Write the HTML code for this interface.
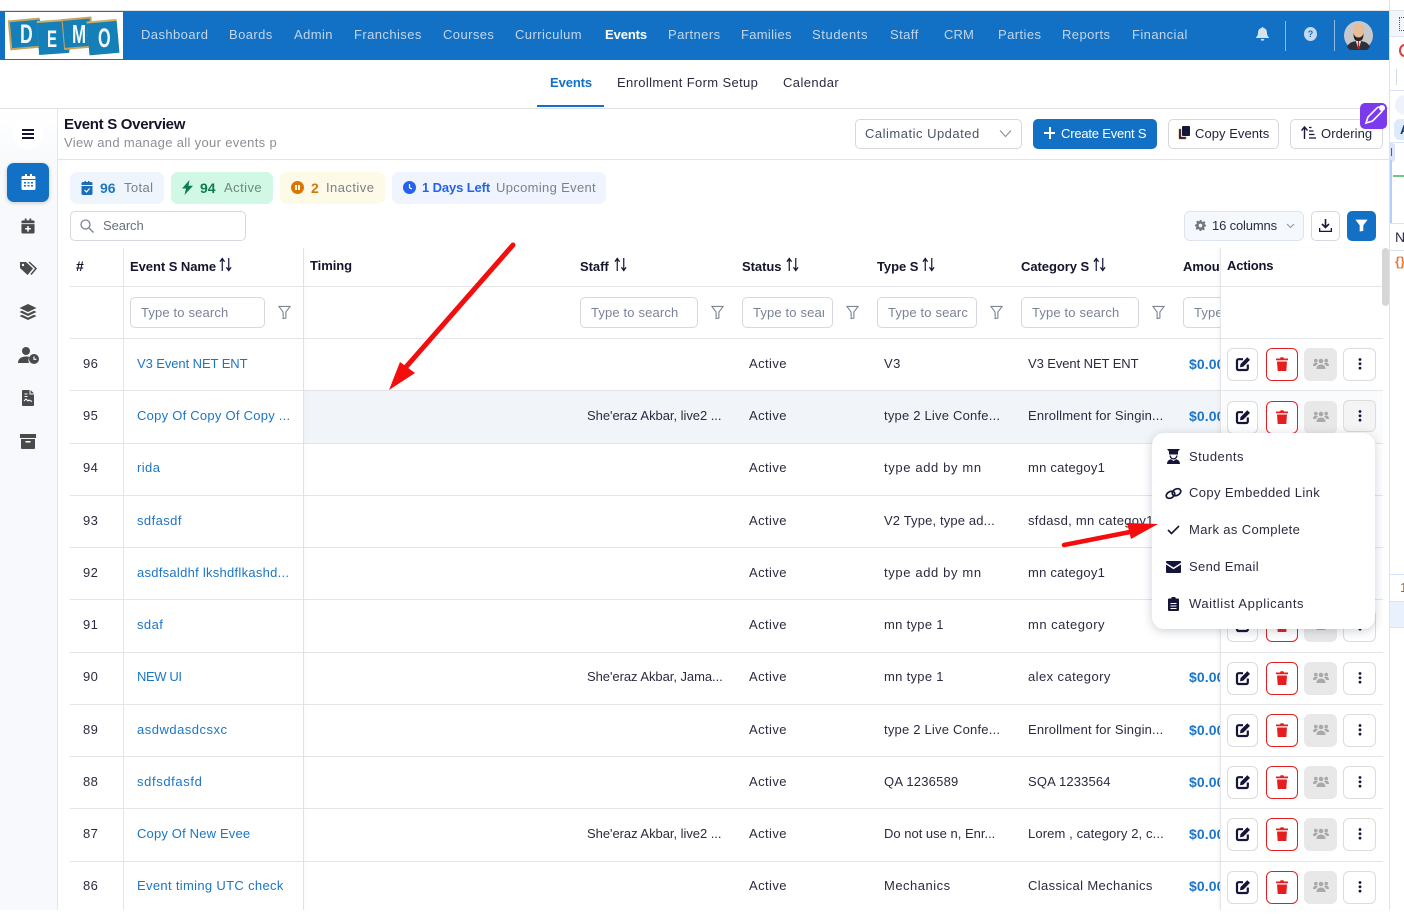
<!DOCTYPE html>
<html><head><meta charset="utf-8"><title>Events</title>
<style>
html,body{margin:0;padding:0;width:1404px;height:910px;overflow:hidden;background:#fff;font-family:"Liberation Sans",sans-serif}
div,span,svg{position:absolute;box-sizing:border-box}
.t{white-space:nowrap;line-height:20px;font-size:13px;letter-spacing:.42px;color:#2b2b40}
.n{color:#c3d5e9;top:25px;letter-spacing:.42px}
.h{font-weight:bold;color:#14142b;top:256px;letter-spacing:-.05px}
.b{background:#fff;border:1px solid #d6d8e0;border-radius:5px}
.f{top:297px;height:31px;background:#fff;border:1px solid #d6d8e0;border-radius:5px;overflow:hidden;color:#7a8394;font-size:13px;line-height:29px;padding-left:10px;white-space:nowrap;letter-spacing:.15px}
.r{left:70px;width:1313px;height:53px;border-top:1px solid #e3e5ea}
.l{color:#1b76c6}
.m{color:#1b76c6;font-weight:bold;font-size:14px;letter-spacing:.1px;left:1189px;width:31px;overflow:hidden}
.a{width:31px;height:33px;top:9px;background:#fff;border:1px solid #dcdcdc;border-radius:6px}
.a svg{left:7px;top:7px;width:16px;height:16px}
.a1{left:1157px}.a2{left:1196px;width:32px;border-color:#e51f1f}.a3{left:1234px;background:#e8e8e8;border-color:#e8e8e8;width:33px}.a4{left:1273px;width:33px}
.a2 svg{left:7px}.a3 svg{left:8px}.a4 svg{left:8px}
</style></head><body>
<svg width="0" height="0" style="position:absolute">
<symbol id="ed" viewBox="0 0 16 16"><path d="M8 3.200H3.500A1.500 1.500 0 0 0 2 4.700v7.800A1.500 1.500 0 0 0 3.500 14h7.800a1.500 1.500 0 0 0 1.500-1.500V8.500" fill="none" stroke="#15153a" stroke-width="2.200"/><path d="M5.500 8 12.300 1.200 15 3.900 8.200 10.700 5 11.200z" fill="#15153a"/></symbol>
<symbol id="tr" viewBox="0 0 16 16"><path d="M2 2.500h4l.6-1.200h2.800l.6 1.200h4v1.800H2zM3 5.500h10l-.7 9.500H3.700z" fill="#e51f1f"/></symbol>
<symbol id="gr" viewBox="0 0 16 16"><circle cx="8" cy="5" r="2.300" fill="#a9a9a9"/><circle cx="2.800" cy="4.500" r="1.800" fill="#a9a9a9"/><circle cx="13.200" cy="4.500" r="1.800" fill="#a9a9a9"/><path d="M3.500 13c0-3 2-4.500 4.500-4.500s4.500 1.500 4.500 4.500zM0 10c0-2 1-3.500 3-3.500 1 0 1.500.5 2 1-1.500 1-2 2-2.200 2.500zM16 10c0-2-1-3.500-3-3.500-1 0-1.500.5-2 1 1.500 1 2 2 2.200 2.500z" fill="#a9a9a9"/></symbol>
<symbol id="dt" viewBox="0 0 16 16"><circle cx="8" cy="3.500" r="1.400" fill="#15153a"/><circle cx="8" cy="7.800" r="1.400" fill="#15153a"/><circle cx="8" cy="12.100" r="1.400" fill="#15153a"/></symbol>
<symbol id="fn" viewBox="0 0 14 16"><path d="M1 1.500h12L8.500 7.500v6.500L5.500 14.500V7.500z" fill="none" stroke="#7d8592" stroke-width="1.200"/></symbol>
<symbol id="so" viewBox="0 0 14 16"><path d="M3.500 15V2.500M1 5l2.500-3.500L6 5" fill="none" stroke="#15153a" stroke-width="1.300"/><path d="M10.500 1v12.500M8 11l2.500 3.500L13 11" fill="none" stroke="#15153a" stroke-width="1.300"/></symbol>
</svg>

<!-- navbar -->
<div style="left:0;top:10px;width:1404px;height:1px;background:#dfe3e8"></div>
<div style="left:0;top:11px;width:1389px;height:49px;background:#1271c4"></div>
<div style="left:5px;top:12px;width:118px;height:47px;background:#fff"></div>
<svg style="left:5px;top:12px" width="118" height="47" viewBox="0 0 118 47">
<g transform="rotate(-5 20 22)"><rect x="4" y="7" width="32" height="30" fill="#c9a35a"/><rect x="6" y="9" width="30" height="26" fill="#1580b8"/></g>
<g transform="rotate(-4 47 26)"><rect x="33" y="8" width="31" height="33" fill="#d3ae66"/><rect x="33" y="10" width="30" height="32" fill="#1580b8"/></g>
<g transform="rotate(-5 70 24)"><rect x="58" y="6" width="30" height="31" fill="#c9a35a"/><rect x="59" y="8" width="27" height="27" fill="#1580b8"/></g>
<g transform="rotate(-5 99 25)"><rect x="83" y="8" width="30" height="33" fill="#d3ae66"/><rect x="83" y="10" width="30" height="32" fill="#1580b8"/></g>
<text transform="translate(15,31) scale(.65,1)" font-family="Liberation Sans" font-weight="bold" font-size="27" fill="#f3f7fa">D</text>
<text transform="translate(42,35) scale(.6,.95)" font-family="Liberation Sans" font-weight="bold" font-size="25" fill="#f3f7fa">E</text>
<text transform="translate(67,31) scale(.65,1)" font-family="Liberation Sans" font-weight="bold" font-size="26" fill="#f3f7fa">M</text>
<text transform="translate(93,35) scale(.6,1)" font-family="Liberation Sans" font-weight="bold" font-size="27" fill="#f3f7fa">O</text>
</svg>
<span class="t n" style="left:141px">Dashboard</span>
<span class="t n" style="left:229px">Boards</span>
<span class="t n" style="left:294px">Admin</span>
<span class="t n" style="left:354px">Franchises</span>
<span class="t n" style="left:443px">Courses</span>
<span class="t n" style="left:515px">Curriculum</span>
<span class="t n" style="left:605px;color:#fff;font-weight:bold;letter-spacing:-.1px">Events</span>
<span class="t n" style="left:668px">Partners</span>
<span class="t n" style="left:741px;letter-spacing:.3px">Families</span>
<span class="t n" style="left:812px;letter-spacing:.6px">Students</span>
<span class="t n" style="left:890px">Staff</span>
<span class="t n" style="left:944px;letter-spacing:.1px">CRM</span>
<span class="t n" style="left:998px">Parties</span>
<span class="t n" style="left:1062px">Reports</span>
<span class="t n" style="left:1132px">Financial</span>
<svg style="left:1256px;top:27px" width="13" height="14" viewBox="0 0 13 14"><path d="M6.500 0a1 1 0 0 1 1 1c2.500.5 3.500 2.500 3.500 5 0 2 .8 3.200 2 4.500v.5H0v-.5C1.200 9.200 2 8 2 6c0-2.500 1-4.500 3.500-5a1 1 0 0 1 1-1zM4.800 12h3.400a1.700 1.700 0 0 1-3.400 0z" fill="#d6e3f2"/></svg>
<div style="left:1285px;top:21px;width:1px;height:30px;background:#8fbae2"></div>
<div style="left:1304px;top:27px;width:13px;height:14px;border-radius:50%;background:#c6d9ee;color:#1271c4;font:bold 9px/14px 'Liberation Sans';text-align:center">?</div>
<div style="left:1334px;top:20px;width:1px;height:31px;background:#8fbae2"></div>
<svg style="left:1344px;top:21px" width="29" height="29" viewBox="0 0 29 29"><circle cx="14.500" cy="14.500" r="14.500" fill="#c6c8cc"/><path d="M3 26c2-5 7-6 11.500-6S24 21 26 26a14.500 14.500 0 0 1-23 0z" fill="#2d3038"/><path d="M12 20h5l-2 8h-1z" fill="#f0f0f0"/><path d="M14 20h1l.6 8h-2.200z" fill="#b3262b"/><ellipse cx="14.500" cy="10" rx="5.500" ry="7.500" fill="#e7bd97"/><path d="M9.500 12c1 6 9 6 10 0 0 7-2 8-5 8s-5-1-5-8z" fill="#2b2320"/></svg>

<!-- right edge panel -->
<div style="left:1389px;top:0;width:1px;height:910px;background:#d8e3f5"></div>
<div style="left:1390px;top:11px;width:14px;height:26px;background:#f2f5fa;border-bottom:1px solid #dbe4f2"></div>
<div style="left:1399px;top:17px;width:5px;height:14px;border:1px dotted #555;border-right:0"></div>
<div style="left:1399px;top:44px;width:11px;height:13px;border:2px solid #d64040;border-radius:50%"></div>
<div style="left:1396px;top:69px;width:1px;height:16px;background:#cfdcf0"></div>
<div style="left:1390px;top:90px;width:14px;height:1px;background:#d8e3f5"></div>
<div style="left:1395px;top:95px;width:20px;height:20px;border-radius:10px;background:#eef2f9"></div>
<div style="left:1394px;top:119px;width:20px;height:21px;border-radius:6px;background:#dceafc"></div>
<span class="t" style="left:1400px;top:120px;color:#1a3a6a;font-weight:bold;letter-spacing:0">A</span>
<div style="left:1390px;top:142px;width:14px;height:1px;background:#d8e3f5"></div>
<div style="left:1390px;top:143px;width:5px;height:19px;background:#d7e6fb;border-radius:0 3px 3px 0"></div>
<div style="left:1391px;top:148px;width:1px;height:8px;background:#1271c4"></div>
<div style="left:1390px;top:160px;width:2px;height:63px;background:#b4d0f8"></div>
<div style="left:1393px;top:175px;width:11px;height:2px;background:#6cc77f"></div>
<div style="left:1390px;top:223px;width:14px;height:1px;background:#d8e3f5"></div>
<span class="t" style="left:1395px;top:227px;font-size:14px;letter-spacing:0">N</span>
<div style="left:1390px;top:250px;width:14px;height:1px;background:#d8e3f5"></div>
<span class="t" style="left:1395px;top:252px;color:#e8793a;font-size:13px;font-weight:bold;letter-spacing:0">{}</span>
<div style="left:1390px;top:574px;width:14px;height:1px;background:#d8e3f5"></div>
<span class="t" style="left:1400px;top:578px;color:#9a6a3a;letter-spacing:0">1</span>
<div style="left:1390px;top:601px;width:14px;height:27px;background:#e9f1ff;border-top:1px solid #d8e3f5;border-bottom:1px solid #d8e3f5"></div>

<!-- sub nav -->
<span class="t" style="left:550px;top:73px;color:#1271c4;font-weight:bold;letter-spacing:-.1px">Events</span>
<span class="t" style="left:617px;top:73px;letter-spacing:.36px">Enrollment Form Setup</span>
<span class="t" style="left:783px;top:73px">Calendar</span>
<div style="left:537px;top:105px;width:67px;height:2px;background:#1271c4"></div>
<div style="left:0;top:108px;width:1389px;height:1px;background:#e0e0e0"></div>

<!-- sidebar -->
<div style="left:0;top:109px;width:58px;height:801px;background:linear-gradient(180deg,#fff 0,#f7f9fc 60px);border-right:1px solid #e3e6ec"></div>
<div style="left:13px;top:119px;width:30px;height:30px;border-radius:50%;background:#fff"></div>
<div style="left:22px;top:129px;width:12px;height:2px;background:#14142b"></div>
<div style="left:22px;top:133px;width:12px;height:2px;background:#14142b"></div>
<div style="left:22px;top:137px;width:12px;height:2px;background:#14142b"></div>
<div style="left:7px;top:163px;width:42px;height:39px;border-radius:7px;background:#1271c4;box-shadow:0 1px 4px rgba(0,0,0,.2)"></div>
<svg style="left:21px;top:174px" width="15" height="16" viewBox="0 0 15 16"><path d="M2 2h2V0h2v2h3V0h2v2h2a1.500 1.500 0 0 1 1.500 1.500V5H.5V3.500A1.500 1.500 0 0 1 2 2zM.5 6h14v8.500A1.500 1.500 0 0 1 13 16H2a1.500 1.500 0 0 1-1.500-1.500z" fill="#fff"/><path d="M3 8h2v1.500H3zM6.500 8h2v1.500h-2zM10 8h2v1.500h-2zM3 11h2v1.500H3zM6.500 11h2v1.500h-2zM10 11h2v1.500h-2z" fill="#1271c4"/></svg>
<svg style="left:21px;top:218px" width="14" height="16" viewBox="0 0 15 16"><path d="M2 2h2V0h2v2h3V0h2v2h2a1.500 1.500 0 0 1 1.500 1.500V5H.5V3.500A1.500 1.500 0 0 1 2 2zM.5 6h14v8.500A1.500 1.500 0 0 1 13 16H2a1.500 1.500 0 0 1-1.500-1.500z" fill="#4a4a4a"/><path d="M6.700 8h1.600v2.200h2.200v1.600H8.300V14H6.700v-2.200H4.500v-1.600h2.200z" fill="#fff"/></svg>
<svg style="left:19px;top:261px" width="18" height="15" viewBox="0 0 18 15"><path d="M1 1h6l7 6.500-5.500 6.500L1 7z" fill="#4a4a4a"/><path d="M10 1l7 6.500-5 6" fill="none" stroke="#4a4a4a" stroke-width="1.500"/><circle cx="4" cy="4" r="1.200" fill="#f7f9fc"/></svg>
<svg style="left:19px;top:304px" width="18" height="16" viewBox="0 0 18 16"><path d="M9 0l8.500 4L9 8 .5 4z" fill="#4a4a4a"/><path d="M.5 8L3 6.800 9 9.600l6-2.800L17.500 8 9 12z" fill="#4a4a4a"/><path d="M.5 12L3 10.800 9 13.600l6-2.800 2.500 1.200L9 16z" fill="#4a4a4a"/></svg>
<svg style="left:18px;top:347px" width="21" height="17" viewBox="0 0 21 17"><circle cx="8" cy="4" r="4" fill="#4a4a4a"/><path d="M0 16c0-4 3-6.500 8-6.500 1.500 0 2.500.2 3.500.6-1 1.500-1.500 3.500-.5 5.900z" fill="#4a4a4a"/><circle cx="16" cy="12" r="5" fill="#4a4a4a"/><path d="M16 9.500V12.300h2.500" stroke="#fff" stroke-width="1.200" fill="none"/></svg>
<svg style="left:22px;top:390px" width="12" height="16" viewBox="0 0 12 16"><path d="M1 0h6.500v4.500H12V15a1 1 0 0 1-1 1H1a1 1 0 0 1-1-1V1a1 1 0 0 1 1-1zM8.500 0L12 3.500H8.500z" fill="#4a4a4a"/><path d="M2 11l2-2 2 2 1-1 3 1.500" stroke="#fff" fill="none"/><path d="M2.500 4h3M2.500 6.500h3" stroke="#fff"/></svg>
<svg style="left:20px;top:434px" width="16" height="15" viewBox="0 0 16 15"><rect width="16" height="4" y="0" fill="#4a4a4a"/><path d="M1 5h14v9a1 1 0 0 1-1 1H2a1 1 0 0 1-1-1z" fill="#4a4a4a"/><rect x="5.500" y="7" width="5" height="1.500" fill="#fff"/></svg>

<!-- page header -->
<span class="t" style="left:64px;top:115px;font-size:15px;font-weight:bold;color:#14142b;letter-spacing:-.3px">Event S Overview</span>
<span class="t" style="left:64px;top:133px;color:#8b8f96;letter-spacing:.33px">View and manage all your events p</span>
<div style="left:58px;top:159px;width:1331px;height:1px;background:#e3e3e3"></div>
<div class="b t" style="left:855px;top:119px;width:167px;height:30px;line-height:28px;padding-left:9px;color:#4a5468;letter-spacing:.5px">Calimatic Updated</div>
<svg style="left:999px;top:129px" width="13" height="9" viewBox="0 0 13 9"><path d="M1 1.500l5.500 6 5.500-6" fill="none" stroke="#8b93a3" stroke-width="1.200"/></svg>
<div style="left:1033px;top:119px;width:124px;height:30px;background:#1271c4;border-radius:5px"></div>
<div style="left:1044px;top:132px;width:11px;height:2px;background:#fff"></div>
<div style="left:1049px;top:127px;width:2px;height:12px;background:#fff"></div>
<span class="t" style="left:1061px;top:124px;color:#fff;letter-spacing:-.2px">Create Event S</span>
<div class="b" style="left:1168px;top:119px;width:111px;height:30px"></div>
<svg style="left:1178px;top:126px" width="12" height="14" viewBox="0 0 12 14"><rect x="4" y="0" width="8" height="10" rx="1" fill="#15153a"/><path d="M3 3H1v10h7v-2H3z" fill="#15153a" stroke="#c5701f" stroke-width=".5"/></svg>
<span class="t" style="left:1195px;top:124px;letter-spacing:.05px;color:#23233a">Copy Events</span>
<div class="b" style="left:1290px;top:119px;width:93px;height:30px"></div>
<svg style="left:1301px;top:126px" width="15" height="13" viewBox="0 0 15 13"><path d="M3.500 13V2M.5 4.500l3-3.500 3 3.500" fill="none" stroke="#15153a" stroke-width="1.400"/><path d="M8 1.500h2.500M8 5h4.500M8 8.500h5.500M8 12h7" stroke="#15153a" stroke-width="1.300"/></svg>
<span class="t" style="left:1321px;top:124px;letter-spacing:.08px;color:#23233a">Ordering</span>
<div style="left:1360px;top:103px;width:27px;height:26px;border-radius:5px;background:#7c3aed"></div>
<svg style="left:1360px;top:103px" width="27" height="26" viewBox="0 0 27 26"><path d="M6 20l2-6L17 5a3 3 0 0 1 4.500 4L12.500 18z" fill="none" stroke="#fff" stroke-width="1.600"/><circle cx="22" cy="5" r="3" fill="#fff"/></svg>

<!-- chips -->
<div style="left:70px;top:172px;width:94px;height:32px;background:#eff5fd;border-radius:7px"></div>
<svg style="left:81px;top:181px" width="12" height="14" viewBox="0 0 12 14"><path d="M2 1h1.500V0h1.500v1h2V0h1.500v1H10a1.500 1.500 0 0 1 1.500 1.500V4H.5V2.500A1.500 1.500 0 0 1 2 1zM.5 5h11v7.500A1.500 1.500 0 0 1 10 14H2a1.500 1.500 0 0 1-1.500-1.500z" fill="#1b6fb8"/><path d="M3.500 9l2 2 3-3.500" stroke="#fff" fill="none" stroke-width="1.200"/></svg>
<span class="t" style="left:100px;top:178px;font-weight:bold;color:#1b76c6;font-size:14px;letter-spacing:0">96</span>
<span class="t" style="left:124px;top:178px;color:#7c8088;letter-spacing:.4px">Total</span>
<div style="left:171px;top:172px;width:102px;height:32px;background:#d0f8e4;border-radius:7px"></div>
<svg style="left:182px;top:180px" width="11" height="15" viewBox="0 0 11 15"><path d="M7.500 0L0 8.500h4L2.500 15 11 5.800H6.500z" fill="#0e7a55"/></svg>
<span class="t" style="left:200px;top:178px;font-weight:bold;color:#0e7a55;font-size:14px;letter-spacing:0">94</span>
<span class="t" style="left:224px;top:178px;color:#6c8a7c;letter-spacing:.45px">Active</span>
<div style="left:280px;top:172px;width:105px;height:32px;background:#fefae8;border-radius:7px"></div>
<div style="left:291px;top:181px;width:13px;height:13px;border-radius:50%;background:#d97706"></div>
<div style="left:295px;top:185px;width:2px;height:5px;background:#fefae8"></div>
<div style="left:298px;top:185px;width:2px;height:5px;background:#fefae8"></div>
<span class="t" style="left:311px;top:178px;font-weight:bold;color:#d97706;font-size:14px;letter-spacing:0">2</span>
<span class="t" style="left:326px;top:178px;color:#7c8088;letter-spacing:.45px">Inactive</span>
<div style="left:392px;top:172px;width:214px;height:32px;background:#eff4fe;border-radius:7px"></div>
<div style="left:403px;top:181px;width:13px;height:13px;border-radius:50%;background:#2563eb"></div>
<svg style="left:403px;top:181px" width="13" height="13" viewBox="0 0 13 13"><path d="M6.500 3v3.700l2.500 1.300" fill="none" stroke="#fff" stroke-width="1.200"/></svg>
<span class="t" style="left:422px;top:178px;font-weight:bold;color:#2563eb;letter-spacing:-.12px">1 Days Left</span>
<span class="t" style="left:496px;top:178px;color:#7c8088;letter-spacing:.33px">Upcoming Event</span>

<!-- toolbar -->
<div class="b" style="left:70px;top:211px;width:176px;height:30px"></div>
<svg style="left:80px;top:219px" width="14" height="14" viewBox="0 0 14 14"><circle cx="5.500" cy="5.500" r="4.500" fill="none" stroke="#7a8394" stroke-width="1.300"/><path d="M9 9l4.500 4.500" stroke="#7a8394" stroke-width="1.300"/></svg>
<span class="t" style="left:103px;top:216px;color:#697180;letter-spacing:-.1px">Search</span>
<div style="left:1184px;top:211px;width:120px;height:30px;background:#f5f9fe;border:1px solid #dde4ee;border-radius:6px"></div>
<svg style="left:1195px;top:220px" width="11" height="11" viewBox="0 0 24 24"><path d="M10 0h4l.7 3.300 2.400 1 2.800-1.800 2.800 2.800-1.800 2.800 1 2.400L24 10v4l-3.300.7-1 2.400 1.800 2.800-2.800 2.800-2.800-1.800-2.400 1L14 24h-4l-.7-3.300-2.400-1-2.800 1.800-2.800-2.800 1.800-2.800-1-2.400L0 14v-4l3.300-.7 1-2.400-1.800-2.800 2.800-2.800 2.800 1.800 2.400-1zM12 8a4 4 0 1 0 0 8 4 4 0 0 0 0-8z" fill="#6f7680"/></svg>
<span class="t" style="left:1212px;top:216px;letter-spacing:-.15px">16 columns</span>
<svg style="left:1286px;top:223px" width="9" height="6" viewBox="0 0 9 6"><path d="M1 1l3.500 3.500L8 1" fill="none" stroke="#8b93a3" stroke-width="1"/></svg>
<div class="b" style="left:1311px;top:211px;width:29px;height:30px"></div>
<svg style="left:1319px;top:219px" width="13" height="13" viewBox="0 0 13 13"><path d="M6.500 0v8M3 5l3.500 3.500L10 5" fill="none" stroke="#15153a" stroke-width="1.600"/><path d="M.5 9v3.500h12V9" fill="none" stroke="#15153a" stroke-width="1.600"/></svg>
<div style="left:1347px;top:211px;width:29px;height:30px;border-radius:5px;background:#1271c4"></div>
<svg style="left:1355px;top:219px" width="13" height="13" viewBox="0 0 14 16"><path d="M1 1.500h12L8.500 7.500v6.500L5.500 14.500V7.500z" fill="#fff" stroke="#fff" stroke-width="1.500"/></svg>

<!-- table header -->
<span class="t h" style="left:76px;font-size:14px">#</span>
<span class="t h" style="left:130px;top:257px">Event S Name</span>
<svg style="left:219px;top:257px" width="13" height="15"><use href="#so"/></svg>
<span class="t h" style="left:310px">Timing</span>
<span class="t h" style="left:580px;top:257px">Staff</span>
<svg style="left:614px;top:257px" width="13" height="15"><use href="#so"/></svg>
<span class="t h" style="left:742px;top:257px">Status</span>
<svg style="left:786px;top:257px" width="13" height="15"><use href="#so"/></svg>
<span class="t h" style="left:877px;top:257px">Type S</span>
<svg style="left:922px;top:257px" width="13" height="15"><use href="#so"/></svg>
<span class="t h" style="left:1021px;top:257px">Category S</span>
<svg style="left:1093px;top:257px" width="13" height="15"><use href="#so"/></svg>
<span class="t h" style="left:1183px;top:257px">Amount</span>
<div style="left:70px;top:286px;width:1313px;height:1px;background:#e3e5ea"></div>

<!-- filter row -->
<div class="f" style="left:130px;width:135px">Type to search</div>
<svg style="left:278px;top:305px" width="13" height="15"><use href="#fn"/></svg>
<div class="f" style="left:580px;width:118px">Type to search</div>
<svg style="left:711px;top:305px" width="13" height="15"><use href="#fn"/></svg>
<div class="f" style="left:742px;width:91px"><span style="position:static;display:block;width:71px;overflow:hidden">Type to search</span></div>
<svg style="left:846px;top:305px" width="13" height="15"><use href="#fn"/></svg>
<div class="f" style="left:877px;width:100px"><span style="position:static;display:block;width:80px;overflow:hidden">Type to search</span></div>
<svg style="left:990px;top:305px" width="13" height="15"><use href="#fn"/></svg>
<div class="f" style="left:1021px;width:118px">Type to search</div>
<svg style="left:1152px;top:305px" width="13" height="15"><use href="#fn"/></svg>
<div class="f" style="left:1183px;width:60px">Type to search</div>

<!-- rows -->
<div class="r" style="top:338px"></div>
<div class="r" style="top:390px;height:53px;background:linear-gradient(90deg,#fff 0,#fff 234px,#f1f5f9 234px)"></div>
<div class="r" style="top:443px"></div>
<div class="r" style="top:495px"></div>
<div class="r" style="top:547px"></div>
<div class="r" style="top:599px"></div>
<div class="r" style="top:652px"></div>
<div class="r" style="top:704px"></div>
<div class="r" style="top:756px"></div>
<div class="r" style="top:808px"></div>
<div class="r" style="top:861px"></div>

<span class="t" style="left:83px;top:354px">96</span><span class="t l" style="left:137px;top:354px;letter-spacing:-.08px">V3 Event NET ENT</span><span class="t" style="left:749px;top:354px">Active</span><span class="t" style="left:884px;top:354px">V3</span><span class="t" style="left:1028px;top:354px;letter-spacing:-.08px">V3 Event NET ENT</span>
<span class="t" style="left:83px;top:406px">95</span><span class="t l" style="left:137px;top:406px;letter-spacing:.25px">Copy Of Copy Of Copy ...</span><span class="t" style="left:587px;top:406px;letter-spacing:-.04px">She'eraz Akbar, live2 ...</span><span class="t" style="left:749px;top:406px">Active</span><span class="t" style="left:884px;top:406px;letter-spacing:.21px">type 2 Live Confe...</span><span class="t" style="left:1028px;top:406px;letter-spacing:.16px">Enrollment for Singin...</span>
<span class="t" style="left:83px;top:458px">94</span><span class="t l" style="left:137px;top:458px">rida</span><span class="t" style="left:749px;top:458px">Active</span><span class="t" style="left:884px;top:458px;letter-spacing:.63px">type add by mn</span><span class="t" style="left:1028px;top:458px;letter-spacing:.24px">mn categoy1</span>
<span class="t" style="left:83px;top:511px">93</span><span class="t l" style="left:137px;top:511px">sdfasdf</span><span class="t" style="left:749px;top:511px">Active</span><span class="t" style="left:884px;top:511px;letter-spacing:.14px">V2 Type, type ad...</span><span class="t" style="left:1028px;top:511px;letter-spacing:.3px">sfdasd, mn categoy1</span>
<span class="t" style="left:83px;top:563px">92</span><span class="t l" style="left:137px;top:563px;letter-spacing:.27px">asdfsaldhf lkshdflkashd...</span><span class="t" style="left:749px;top:563px">Active</span><span class="t" style="left:884px;top:563px;letter-spacing:.63px">type add by mn</span><span class="t" style="left:1028px;top:563px;letter-spacing:.24px">mn categoy1</span>
<span class="t" style="left:83px;top:615px">91</span><span class="t l" style="left:137px;top:615px">sdaf</span><span class="t" style="left:749px;top:615px">Active</span><span class="t" style="left:884px;top:615px;letter-spacing:.3px">mn type 1</span><span class="t" style="left:1028px;top:615px;letter-spacing:.5px">mn category</span>
<span class="t" style="left:83px;top:667px">90</span><span class="t l" style="left:137px;top:667px;letter-spacing:-.4px">NEW UI</span><span class="t" style="left:587px;top:667px;letter-spacing:-.05px">She'eraz Akbar, Jama...</span><span class="t" style="left:749px;top:667px">Active</span><span class="t" style="left:884px;top:667px;letter-spacing:.3px">mn type 1</span><span class="t" style="left:1028px;top:667px">alex category</span>
<span class="t" style="left:83px;top:720px">89</span><span class="t l" style="left:137px;top:720px;letter-spacing:.5px">asdwdasdcsxc</span><span class="t" style="left:749px;top:720px">Active</span><span class="t" style="left:884px;top:720px;letter-spacing:.21px">type 2 Live Confe...</span><span class="t" style="left:1028px;top:720px;letter-spacing:.16px">Enrollment for Singin...</span>
<span class="t" style="left:83px;top:772px">88</span><span class="t l" style="left:137px;top:772px;letter-spacing:.62px">sdfsdfasfd</span><span class="t" style="left:749px;top:772px">Active</span><span class="t" style="left:884px;top:772px;letter-spacing:.22px">QA 1236589</span><span class="t" style="left:1028px;top:772px;letter-spacing:.15px">SQA 1233564</span>
<span class="t" style="left:83px;top:824px">87</span><span class="t l" style="left:137px;top:824px;letter-spacing:.17px">Copy Of New Evee</span><span class="t" style="left:587px;top:824px;letter-spacing:-.04px">She'eraz Akbar, live2 ...</span><span class="t" style="left:749px;top:824px">Active</span><span class="t" style="left:884px;top:824px;letter-spacing:0">Do not use n, Enr...</span><span class="t" style="left:1028px;top:824px;letter-spacing:.12px">Lorem , category 2, c...</span>
<span class="t" style="left:83px;top:876px">86</span><span class="t l" style="left:137px;top:876px;letter-spacing:.33px">Event timing UTC check</span><span class="t" style="left:749px;top:876px">Active</span><span class="t" style="left:884px;top:876px;letter-spacing:.5px">Mechanics</span><span class="t" style="left:1028px;top:876px;letter-spacing:.37px">Classical Mechanics</span>

<span class="t m" style="top:354px">$0.00</span>
<span class="t m" style="top:406px">$0.00</span>
<span class="t m" style="top:667px">$0.00</span>
<span class="t m" style="top:720px">$0.00</span>
<span class="t m" style="top:772px">$0.00</span>
<span class="t m" style="top:824px">$0.00</span>
<span class="t m" style="top:876px">$0.00</span>

<!-- sticky column dividers -->
<div style="left:123px;top:248px;width:1px;height:662px;background:#e3e5ea"></div>
<div style="left:303px;top:248px;width:1px;height:662px;background:#dfe1e6;box-shadow:2px 0 3px rgba(0,0,0,.05)"></div>

<!-- actions column -->
<div style="left:1220px;top:248px;width:163px;height:662px;background:#fff;border-left:1px solid #e3e5ea;box-shadow:-2px 0 3px rgba(0,0,0,.04)"></div>
<span class="t h" style="left:1227px;letter-spacing:-.2px">Actions</span>
<div style="left:1221px;top:286px;width:162px;height:1px;background:#e3e5ea"></div>
<div style="left:1221px;top:338px;width:162px;height:1px;background:#e3e5ea"></div>
<div style="left:1221px;top:390px;width:162px;height:1px;background:#e3e5ea"></div>
<div style="left:1221px;top:391px;width:162px;height:52px;background:#fafbfc"></div>
<div style="left:1221px;top:443px;width:162px;height:1px;background:#e3e5ea"></div>
<div style="left:1221px;top:495px;width:162px;height:1px;background:#e3e5ea"></div>
<div style="left:1221px;top:547px;width:162px;height:1px;background:#e3e5ea"></div>
<div style="left:1221px;top:599px;width:162px;height:1px;background:#e3e5ea"></div>
<div style="left:1221px;top:652px;width:162px;height:1px;background:#e3e5ea"></div>
<div style="left:1221px;top:704px;width:162px;height:1px;background:#e3e5ea"></div>
<div style="left:1221px;top:756px;width:162px;height:1px;background:#e3e5ea"></div>
<div style="left:1221px;top:808px;width:162px;height:1px;background:#e3e5ea"></div>
<div style="left:1221px;top:861px;width:162px;height:1px;background:#e3e5ea"></div>
<div style="left:1382px;top:248px;width:7px;height:58px;background:#d6d6d6;border-radius:4px"></div>

<div style="left:70px;top:339px;width:1313px;height:0">
<div class="a a1"><svg><use href="#ed"/></svg></div><div class="a a2"><svg><use href="#tr"/></svg></div><div class="a a3"><svg><use href="#gr"/></svg></div><div class="a a4"><svg><use href="#dt"/></svg></div>
</div>
<div style="left:70px;top:392px;width:1313px;height:0">
<div class="a a1"><svg><use href="#ed"/></svg></div><div class="a a2"><svg><use href="#tr"/></svg></div><div class="a a3"><svg><use href="#gr"/></svg></div><div class="a a4" style="top:8px;height:32px;background:#f4f4f4"><svg><use href="#dt"/></svg></div>
</div>
<div style="left:70px;top:600px;width:1313px;height:0">
<div class="a a1"><svg><use href="#ed"/></svg></div><div class="a a2"><svg><use href="#tr"/></svg></div><div class="a a3"><svg><use href="#gr"/></svg></div><div class="a a4"><svg><use href="#dt"/></svg></div>
</div>
<div style="left:70px;top:653px;width:1313px;height:0">
<div class="a a1"><svg><use href="#ed"/></svg></div><div class="a a2"><svg><use href="#tr"/></svg></div><div class="a a3"><svg><use href="#gr"/></svg></div><div class="a a4"><svg><use href="#dt"/></svg></div>
</div>
<div style="left:70px;top:705px;width:1313px;height:0">
<div class="a a1"><svg><use href="#ed"/></svg></div><div class="a a2"><svg><use href="#tr"/></svg></div><div class="a a3"><svg><use href="#gr"/></svg></div><div class="a a4"><svg><use href="#dt"/></svg></div>
</div>
<div style="left:70px;top:757px;width:1313px;height:0">
<div class="a a1"><svg><use href="#ed"/></svg></div><div class="a a2"><svg><use href="#tr"/></svg></div><div class="a a3"><svg><use href="#gr"/></svg></div><div class="a a4"><svg><use href="#dt"/></svg></div>
</div>
<div style="left:70px;top:809px;width:1313px;height:0">
<div class="a a1"><svg><use href="#ed"/></svg></div><div class="a a2"><svg><use href="#tr"/></svg></div><div class="a a3"><svg><use href="#gr"/></svg></div><div class="a a4"><svg><use href="#dt"/></svg></div>
</div>
<div style="left:70px;top:862px;width:1313px;height:0">
<div class="a a1"><svg><use href="#ed"/></svg></div><div class="a a2"><svg><use href="#tr"/></svg></div><div class="a a3"><svg><use href="#gr"/></svg></div><div class="a a4"><svg><use href="#dt"/></svg></div>
</div>

<!-- dropdown -->
<div style="left:1152px;top:433px;width:223px;height:196px;background:#fff;border-radius:12px;box-shadow:0 2px 10px rgba(30,40,70,.22)"></div>
<svg style="left:1166px;top:449px" width="15" height="15" viewBox="0 0 15 15"><path d="M1 0h13l-2 2.500V5.500H3V2.500z" fill="#15153a"/><path d="M3.500 6.500h1.300a2.700 2.700 0 0 0 5.400 0h1.300a4 4 0 0 1-8 0z" fill="#15153a"/><path d="M1 15c0-3 2-4.500 4-4.800l2.500 1.800 2.500-1.800c2 .3 4 1.800 4 4.800z" fill="#15153a"/></svg>
<span class="t" style="left:1189px;top:447px;letter-spacing:.45px">Students</span>
<svg style="left:1165px;top:487px" width="17" height="13" viewBox="0 0 17 13"><ellipse cx="5.500" cy="7.800" rx="4.500" ry="3.200" transform="rotate(-28 5.500 7.800)" fill="none" stroke="#15153a" stroke-width="1.700"/><ellipse cx="11.500" cy="5.200" rx="4.500" ry="3.200" transform="rotate(-28 11.500 5.200)" fill="none" stroke="#15153a" stroke-width="1.700"/></svg>
<span class="t" style="left:1189px;top:483px;letter-spacing:.38px">Copy Embedded Link</span>
<svg style="left:1167px;top:525px" width="13" height="10" viewBox="0 0 13 10"><path d="M1 5l3.500 3.500L12 1" fill="none" stroke="#15153a" stroke-width="1.600"/></svg>
<span class="t" style="left:1189px;top:520px;letter-spacing:.36px">Mark as Complete</span>
<svg style="left:1166px;top:561px" width="15" height="12" viewBox="0 0 15 12"><path d="M1 0h13a1 1 0 0 1 1 1v.8L7.500 6.500 0 1.800V1a1 1 0 0 1 1-1zM0 3.500l7.500 4.700L15 3.500V11a1 1 0 0 1-1 1H1a1 1 0 0 1-1-1z" fill="#15153a"/></svg>
<span class="t" style="left:1189px;top:557px;letter-spacing:.35px">Send Email</span>
<svg style="left:1168px;top:597px" width="11" height="14" viewBox="0 0 11 14"><path d="M1 1.500h2.300a2.200 2.200 0 0 1 4.400 0H10a1 1 0 0 1 1 1V13a1 1 0 0 1-1 1H1a1 1 0 0 1-1-1V2.500a1 1 0 0 1 1-1z" fill="#15153a"/><path d="M2.500 6.500h6M2.500 9h6M2.500 11.500h6" stroke="#fff" stroke-width=".9"/></svg>
<span class="t" style="left:1189px;top:594px;letter-spacing:.57px">Waitlist Applicants</span>

<!-- red annotation arrows -->
<svg style="left:0;top:0;z-index:5" width="1404" height="910" viewBox="0 0 1404 910">
<path d="M513 245L406 367" stroke="#f40d0d" stroke-width="5" stroke-linecap="round" fill="none"/>
<path d="M389 390L400 362L415 373z" fill="#f40d0d"/>
<path d="M1064 545L1130 532" stroke="#f40d0d" stroke-width="4.500" stroke-linecap="round" fill="none"/>
<path d="M1158 524L1127 523L1131 539z" fill="#f40d0d"/>
</svg>
</body></html>
